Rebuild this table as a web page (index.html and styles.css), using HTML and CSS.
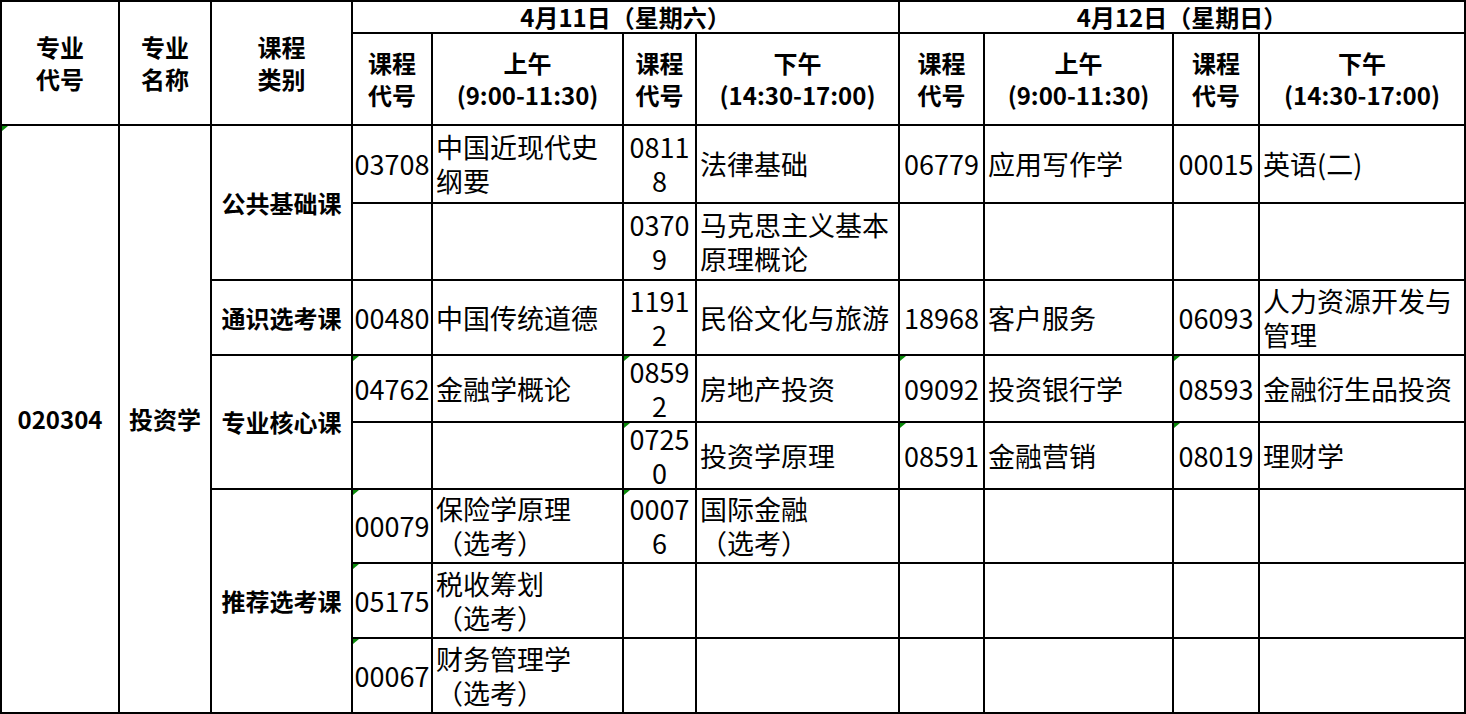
FILE: index.html
```html
<!DOCTYPE html>
<html lang="zh-CN">
<head>
<meta charset="utf-8">
<title>考试安排</title>
<link rel="stylesheet" href="styles.css">
</head>
<body>
<div class="sheet">
  <div class="c hd r2">专业<br>代号</div>
  <div class="c hd r2">专业<br>名称</div>
  <div class="c hd r2">课程<br>类别</div>
  <div class="c hd c4">4月11日（星期六）</div>
  <div class="c hd c4">4月12日（星期日）</div>

  <div class="c hd">课程<br>代号</div>
  <div class="c hd">上午<br>(9:00-11:30)</div>
  <div class="c hd">课程<br>代号</div>
  <div class="c hd">下午<br>(14:30-17:00)</div>
  <div class="c hd">课程<br>代号</div>
  <div class="c hd">上午<br>(9:00-11:30)</div>
  <div class="c hd">课程<br>代号</div>
  <div class="c hd">下午<br>(14:30-17:00)</div>

  <div class="c cat r8 tri">020304</div>
  <div class="c cat r8">投资学</div>
  <div class="c cat r2">公共基础课</div>
  <div class="c code">03708</div>
  <div class="c name">中国近现代史<br>纲要</div>
  <div class="c code">08118</div>
  <div class="c name">法律基础</div>
  <div class="c code">06779</div>
  <div class="c name">应用写作学</div>
  <div class="c code">00015</div>
  <div class="c name">英语(二)</div>

  <div class="c code"></div>
  <div class="c name"></div>
  <div class="c code">03709</div>
  <div class="c name">马克思主义基本<br>原理概论</div>
  <div class="c code"></div>
  <div class="c name"></div>
  <div class="c code"></div>
  <div class="c name"></div>

  <div class="c cat">通识选考课</div>
  <div class="c code">00480</div>
  <div class="c name">中国传统道德</div>
  <div class="c code">11912</div>
  <div class="c name">民俗文化与旅游</div>
  <div class="c code">18968</div>
  <div class="c name">客户服务</div>
  <div class="c code">06093</div>
  <div class="c name">人力资源开发与<br>管理</div>

  <div class="c cat r2">专业核心课</div>
  <div class="c code tri">04762</div>
  <div class="c name">金融学概论</div>
  <div class="c code tri">08592</div>
  <div class="c name">房地产投资</div>
  <div class="c code tri">09092</div>
  <div class="c name">投资银行学</div>
  <div class="c code tri">08593</div>
  <div class="c name">金融衍生品投资</div>

  <div class="c code"></div>
  <div class="c name"></div>
  <div class="c code tri">07250</div>
  <div class="c name">投资学原理</div>
  <div class="c code tri">08591</div>
  <div class="c name">金融营销</div>
  <div class="c code tri">08019</div>
  <div class="c name">理财学</div>

  <div class="c cat r3">推荐选考课</div>
  <div class="c code tri">00079</div>
  <div class="c name">保险学原理<br>（选考）</div>
  <div class="c code tri">00076</div>
  <div class="c name">国际金融<br>（选考）</div>
  <div class="c code"></div>
  <div class="c name"></div>
  <div class="c code"></div>
  <div class="c name"></div>

  <div class="c code tri">05175</div>
  <div class="c name">税收筹划<br>（选考）</div>
  <div class="c code"></div>
  <div class="c name"></div>
  <div class="c code"></div>
  <div class="c name"></div>
  <div class="c code"></div>
  <div class="c name"></div>

  <div class="c code tri">00067</div>
  <div class="c name">财务管理学<br>（选考）</div>
  <div class="c code"></div>
  <div class="c name"></div>
  <div class="c code"></div>
  <div class="c name"></div>
  <div class="c code"></div>
  <div class="c name"></div>
</div>
</body>
</html>
```
FILE: styles.css
```css
html, body {
  margin: 0;
  padding: 0;
  background: #fff;
}

body {
  font-family: "Noto Sans CJK SC", "Noto Sans", sans-serif;
  color: #000;
}

.sheet {
  display: grid;
  grid-template-columns: 118px 92px 141px 80px 191px 73px 203px 85px 189px 86px 206px;
  grid-template-rows: 32px 92px 78px 77px 75px 67px 67px 74px 75px 75px;
  width: max-content;
  border-left: 2px solid #000;
  border-top: 2px solid #000;
}

.c {
  box-sizing: border-box;
  border-right: 2px solid #000;
  border-bottom: 2px solid #000;
  display: flex;
  align-items: center;
  position: relative;
  min-width: 0;
}

.r2 { grid-row: span 2; }
.r3 { grid-row: span 3; }
.r8 { grid-row: span 8; }
.c4 { grid-column: span 4; }

.hd {
  font-weight: 700;
  font-size: 24px;
  line-height: 32px;
  justify-content: center;
  text-align: center;
}

.cat {
  font-weight: 700;
  font-size: 24px;
  line-height: 32px;
  justify-content: center;
  text-align: center;
}

.code {
  font-size: 27px;
  line-height: 34px;
  justify-content: center;
  text-align: center;
  word-break: break-all;
  padding: 0 1px;
}

.name {
  font-size: 27px;
  line-height: 34px;
  justify-content: flex-start;
  text-align: left;
  padding: 0 2px 0 3px;
}

.tri::before {
  content: "";
  position: absolute;
  top: 0;
  left: 0;
  width: 0;
  height: 0;
  border-top: 5px solid #0a8a0a;
  border-right: 6px solid transparent;
}
```
